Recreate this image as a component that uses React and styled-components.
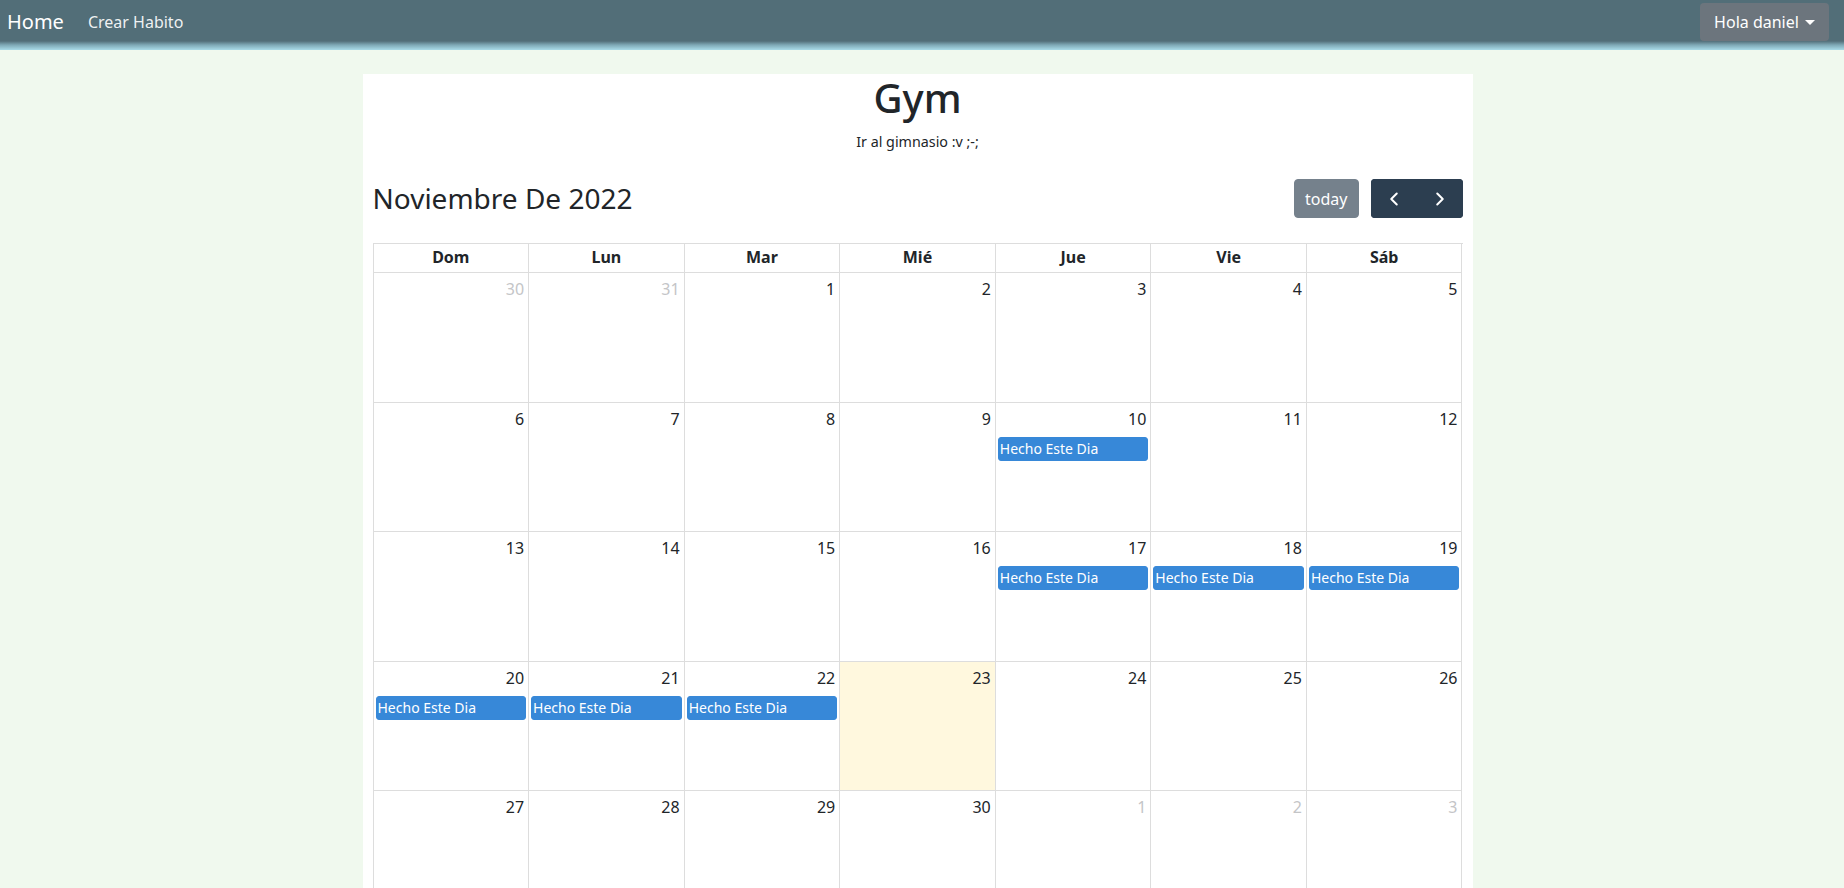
import styled, { createGlobalStyle } from "styled-components";
import { ChevronLeft, ChevronRight } from "lucide-react";

const GlobalStyle = createGlobalStyle`
  body {
    margin: 0;
    background: #f0f9ee;
    font-family: "Noto Sans", "Liberation Sans", sans-serif;
    color: #212529;
    font-size: 16px;
    line-height: 1.5;
  }
  * { box-sizing: border-box; }
`;

const weekDays = ["Dom", "Lun", "Mar", "Mié", "Jue", "Vie", "Sáb"];

const done = [10, 17, 18, 19, 20, 21, 22];

function buildWeeks() {
  const cells = [{ n: 30, other: true }, { n: 31, other: true }];
  for (let d = 1; d <= 30; d++) cells.push({ n: d, other: false });
  for (let d = 1; cells.length < 42; d++) cells.push({ n: d, other: true });
  const weeks = [];
  for (let i = 0; i < 6; i++) weeks.push(cells.slice(i * 7, i * 7 + 7));
  return weeks;
}

export default function App() {
  const weeks = buildWeeks();
  return (
    <>
      <GlobalStyle />
      <Navbar>
        <NavLeft>
          <Brand>Home</Brand>
          <NavLink>Crear Habito</NavLink>
        </NavLeft>
        <Dropdown>
          Hola daniel <Caret />
        </Dropdown>
      </Navbar>
      <Main>
        <Card>
          <Title>Gym</Title>
          <Subtitle>Ir al gimnasio :v ;-;</Subtitle>
          <Toolbar>
            <MonthTitle>Noviembre De 2022</MonthTitle>
            <ToolbarButtons>
              <TodayButton disabled>today</TodayButton>
              <ButtonGroup>
                <NavButton>
                  <ChevronLeft size={22} strokeWidth={2.2} />
                </NavButton>
                <NavButton>
                  <ChevronRight size={22} strokeWidth={2.2} />
                </NavButton>
              </ButtonGroup>
            </ToolbarButtons>
          </Toolbar>
          <Calendar>
            {weekDays.map((d) => (
              <HeadCell key={d}>{d}</HeadCell>
            ))}
            {weeks.map((week, wi) =>
              week.map((c, ci) => {
                const isToday = !c.other && c.n === 23;
                const hasEvent = !c.other && done.includes(c.n);
                return (
                  <DayCell key={wi + "-" + ci} $today={isToday}>
                    <DayNumber $other={c.other}>{c.n}</DayNumber>
                    {hasEvent && <Event>Hecho Este Dia</Event>}
                  </DayCell>
                );
              })
            )}
          </Calendar>
        </Card>
      </Main>
    </>
  );
}

const Navbar = styled.nav`
  height: 50px;
  display: flex;
  align-items: flex-start;
  justify-content: space-between;
  padding: 3px 15px 0 7px;
  background: linear-gradient(
    to bottom,
    #526e78 0px,
    #526e78 41px,
    #7fa9b6 45px,
    #a9dbe8 50px
  );
`;

const NavLeft = styled.div`
  display: flex;
  align-items: center;
  gap: 24px;
  height: 38px;
`;

const Brand = styled.span`
  font-size: 20px;
  color: #ffffff;
  line-height: 30px;
`;

const NavLink = styled.span`
  font-size: 16px;
  color: rgba(255, 255, 255, 0.92);
`;

const Dropdown = styled.button`
  height: 38px;
  width: 129px;
  border: none;
  border-radius: 4px;
  background: #6c757d;
  color: #fff;
  font-family: inherit;
  font-size: 16px;
  display: flex;
  align-items: center;
  justify-content: center;
  gap: 6px;
  padding: 0 12px;
`;

const Caret = styled.span`
  width: 0;
  height: 0;
  border-left: 5px solid transparent;
  border-right: 5px solid transparent;
  border-top: 5px solid #fff;
  margin-top: 1px;
`;

const Main = styled.main`
  padding-top: 24px;
  display: flex;
  justify-content: center;
`;

const Card = styled.section`
  width: 1110px;
  margin-left: -9px;
  background: #fff;
  padding: 0 10px;
`;

const Title = styled.h1`
  margin: 0;
  text-align: center;
  font-size: 40px;
  font-weight: 500;
  line-height: 1.2;
`;

const Subtitle = styled.p`
  margin: 9px 0 0;
  text-align: center;
  font-size: 14.3px;
`;

const Toolbar = styled.div`
  display: flex;
  align-items: center;
  justify-content: space-between;
  margin-top: 27px;
  margin-bottom: 25px;
`;

const MonthTitle = styled.h2`
  margin: 0;
  font-size: 28px;
  font-weight: 400;
  line-height: 1.2;
`;

const ToolbarButtons = styled.div`
  display: flex;
  gap: 12px;
`;

const TodayButton = styled.button`
  height: 39px;
  padding: 0 10px;
  font-family: inherit;
  font-size: 16px;
  color: #fff;
  background: #2c3e50;
  border: 1px solid #2c3e50;
  border-radius: 4px;
  opacity: 0.65;
`;

const ButtonGroup = styled.div`
  display: flex;
  border-radius: 4px;
  overflow: hidden;
  background: #2c3e50;
`;

const NavButton = styled.button`
  width: 46px;
  height: 39px;
  border: none;
  background: #2c3e50;
  color: #fff;
  display: flex;
  align-items: center;
  justify-content: center;
  padding: 0;
`;

const Calendar = styled.div`
  display: grid;
  grid-template-columns: repeat(7, 1fr);
  border-top: 1px solid #ddd;
  border-left: 1px solid #ddd;
`;

const HeadCell = styled.div`
  height: 29px;
  border-right: 1px solid #ddd;
  border-bottom: 1px solid #ddd;
  text-align: center;
  font-weight: 700;
  line-height: 27px;
  font-size: 16px;
`;

const DayCell = styled.div`
  height: 129.5px;
  border-right: 1px solid #ddd;
  border-bottom: 1px solid #ddd;
  background: ${(p) => (p.$today ? "#fff8de" : "#fff")};
  display: flex;
  flex-direction: column;
`;

const DayNumber = styled.div`
  text-align: right;
  padding: 4px 4px 4px;
  font-size: 16px;
  line-height: 24px;
  color: ${(p) => (p.$other ? "#c4c5c7" : "#212529")};
`;

const Event = styled.div`
  margin: 2px 2px 0 2px;
  padding: 1px 1px;
  background: #3788d8;
  border: 1px solid #3788d8;
  border-radius: 3px;
  color: #fff;
  font-size: 14px;
  line-height: 20px;
  white-space: nowrap;
  overflow: hidden;
`;
